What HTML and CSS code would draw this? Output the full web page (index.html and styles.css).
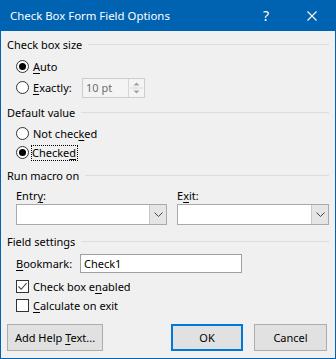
FILE: index.html
```html
<!DOCTYPE html>
<html lang="en">
<head>
  <meta charset="UTF-8" />
  <title>Check Box Form Field Options</title>
  <link rel="stylesheet" href="styles.css">
</head>
<body>
  <div class="dialog">
    <div class="titlebar">
      <span class="title">Check Box Form Field Options</span>
      <span class="help">?</span>
      <span class="close">
        <svg width="10" height="10" viewBox="0 0 10 10"><path d="M0.5 0.5L9.5 9.5M9.5 0.5L0.5 9.5" stroke="#fff" stroke-width="1.1" fill="none"/></svg>
      </span>
    </div>

    <div class="content">
      <div class="legend"><span>Check box size</span></div>
      <div class="rows first">
        <div class="row tall"><span class="radio on"></span><span class="txt"><u>A</u>uto</span></div>
        <div class="row tall">
          <span class="radio"></span><span class="txt exact"><u>E</u>xactly:</span>
          <div class="spin">
            <span class="spin-val">10 pt</span>
            <span class="spin-btns">
              <svg width="15" height="18" viewBox="0 0 15 18"><path d="M4.5 6.5L7.5 3.5L10.5 6.5Z" fill="#a0a0a0"/><path d="M4.5 11.5L7.5 14.5L10.5 11.5Z" fill="#a0a0a0"/><path d="M1 9H14" stroke="#d6d6d6"/></svg>
            </span>
          </div>
        </div>
      </div>

      <div class="legend g2"><span>Default value</span></div>
      <div class="rows first">
        <div class="row"><span class="radio"></span><span class="txt">Not chec<u>k</u>ed</span></div>
        <div class="row"><span class="radio on"></span><span class="txt focus">Checke<u>d</u></span></div>
      </div>

      <div class="legend g3"><span>Run macro on</span></div>
      <div class="macro">
        <div class="macro-col">
          <span class="field-label">Entr<u>y</u>:</span>
          <div class="combo"><span class="combo-val"></span><span class="drop"><svg width="9" height="5" viewBox="0 0 9 5"><path d="M0.5 0.5L4.5 4.5L8.5 0.5" stroke="#444" fill="none"/></svg></span></div>
        </div>
        <div class="macro-col wide">
          <span class="field-label">E<u>x</u>it:</span>
          <div class="combo"><span class="combo-val"></span><span class="drop"><svg width="9" height="5" viewBox="0 0 9 5"><path d="M0.5 0.5L4.5 4.5L8.5 0.5" stroke="#444" fill="none"/></svg></span></div>
        </div>
      </div>

      <div class="legend g4"><span>Field settings</span></div>
      <div class="rows bookmark-row">
        <div class="row"><span class="bm-label"><u>B</u>ookmark:</span><span class="textbox">Check1</span></div>
      </div>
      <div class="rows first">
        <div class="row">
          <span class="check"><svg width="11" height="11" viewBox="0 0 11 11"><path d="M1.5 5.5L4.2 8.3L9.6 2.2" stroke="#444" stroke-width="1.1" fill="none"/></svg></span>
          <span class="txt">Check box e<u>n</u>abled</span>
        </div>
        <div class="row"><span class="check"></span><span class="txt"><u>C</u>alculate on exit</span></div>
      </div>

      <div class="buttons">
        <button class="btn help-btn">Add Help <u>T</u>ext...</button>
        <button class="btn ok">OK</button>
        <button class="btn cancel">Cancel</button>
      </div>
    </div>
  </div>
</body>
</html>
```

FILE: styles.css
```css
body {
  margin: 0;
  font-family: "Noto Sans", sans-serif;
  font-size: 11px;
  color: #000;
}
.dialog {
  width: 336px;
  height: 359px;
  box-sizing: border-box;
  background: #f0f0f0;
  border: 1px solid #0063b1;
  border-top: none;
}
.titlebar {
  height: 31px;
  background: #0063b1;
  color: #fff;
  display: flex;
  align-items: center;
}
.title {
  font-size: 11.4px;
  padding-left: 9px;
  flex: 1;
}
.help, .close {
  width: 46px;
  text-align: center;
  display: flex;
  justify-content: center;
  align-items: center;
}
.help {
  font-size: 14px;
}
.content {
  padding: 5px 6px 0 6px;
}
u {
  text-decoration-thickness: 1px;
  text-underline-offset: 2px;
}
.legend {
  height: 16px;
  display: flex;
  align-items: center;
}
.legend::after {
  content: "";
  flex: 1;
  height: 1px;
  background: #dcdcdc;
  margin-left: 6px;
}
.g2 { margin-top: 6px; }
.g3 { margin-top: 5px; }
.g4 { margin-top: 8px; }
.rows {
  padding-left: 9px;
}
.rows.first {
  margin-top: 4px;
}
.row {
  height: 19px;
  display: flex;
  align-items: center;
}
.row.tall {
  height: 21px;
}
.radio {
  width: 13px;
  height: 13px;
  box-sizing: border-box;
  border: 1px solid #333;
  border-radius: 50%;
  background: #fff;
  display: flex;
  justify-content: center;
  align-items: center;
  flex: none;
}
.radio.on::after {
  content: "";
  width: 7px;
  height: 7px;
  border-radius: 50%;
  background: #000;
}
.txt {
  margin-left: 4px;
  line-height: 14px;
}
.exact {
  width: 49px;
}
.focus {
  border: 1px dotted #000;
  margin-left: 2px;
  padding: 0 1px 0 0;
}
.spin {
  width: 63px;
  height: 20px;
  box-sizing: border-box;
  border: 1px solid #ccc;
  background: #f4f4f4;
  display: flex;
  align-items: center;
}
.spin-val {
  flex: 1;
  color: #6d6d6d;
  padding-left: 3px;
}
.spin-btns {
  width: 15px;
  height: 18px;
  border-left: 1px solid #d6d6d6;
  display: flex;
}
.macro {
  margin-top: 6px;
  padding-left: 9px;
  display: flex;
  gap: 10px;
}
.macro-col {
  width: 151px;
  display: flex;
  flex-direction: column;
}
.macro-col.wide {
  width: 152px;
}
.field-label {
  height: 15px;
  line-height: 13px;
}
.combo {
  height: 21px;
  box-sizing: border-box;
  border: 1px solid #a9a9a9;
  background: #fff;
  display: flex;
}
.combo-val {
  flex: 1;
}
.drop {
  width: 16px;
  background: #e5e5e5;
  border-left: 1px solid #c8c8c8;
  display: flex;
  justify-content: center;
  align-items: center;
}
.bookmark-row {
  margin-top: 5px;
}
.bm-label {
  width: 64px;
}
.textbox {
  width: 162px;
  height: 19px;
  box-sizing: border-box;
  border: 1px solid #a0a0a0;
  background: #fff;
  padding-left: 3px;
  line-height: 17px;
}
.check {
  width: 13px;
  height: 13px;
  box-sizing: border-box;
  border: 1px solid #333;
  background: #fff;
  display: flex;
  flex: none;
}
.buttons {
  margin-top: 9px;
  padding-right: 2px;
  display: flex;
}
.btn {
  height: 27px;
  font-family: "Noto Sans", sans-serif;
  font-size: 11px;
  color: #000;
  background: #e1e1e1;
  border: 1px solid #adadad;
  padding: 0;
}
.help-btn {
  width: 96px;
}
.ok {
  width: 72px;
  margin-left: auto;
  border: 2px solid #0078d7;
}
.cancel {
  width: 73px;
  margin-left: 11px;
}
```
